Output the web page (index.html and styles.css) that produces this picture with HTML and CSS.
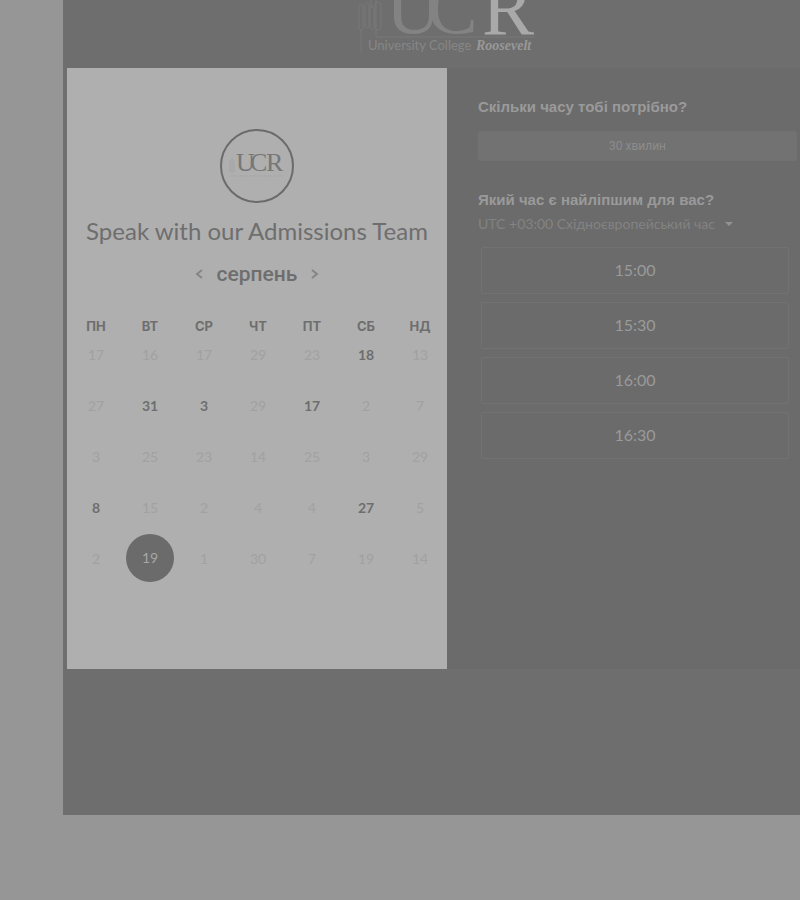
FILE: index.html
```
<!DOCTYPE html>
<html lang="uk">
<head>
<meta charset="utf-8">
<meta name="viewport" content="width=device-width, initial-scale=1">
<title>University College Roosevelt</title>
<link rel="stylesheet" href="styles.css">
</head>
<body>
<div class="shell">
  <header class="header">
    <svg class="logo" viewBox="0 0 180 56" role="img" aria-label="University College Roosevelt">
      <g class="logo-lines">
        <path d="M2 6q2-4 4 0v22q-2 5-4 0zM8 4q2-3 4 0v22q-2 4-4 0zM13 8q2-4 4 0v20q-2 4-4 0zM18 4q3-4 6 0v24q-3 5-6 0zM4 30v22M14 0v8M19 0v37h159"/>
      </g>
      <text class="logo-dim" x="29" y="33" font-size="76">U</text>
      <text class="logo-dim" x="70" y="33" font-size="76">C</text>
      <text class="logo-bright" x="125" y="34" font-size="78">R</text>
      <text class="logo-name" x="11" y="50">University College</text>
      <text class="logo-script" x="119" y="50">Roosevelt</text>
    </svg>
  </header>
  <main class="booking">
    <section class="calendar">
      <svg class="avatar" viewBox="0 0 76 76" role="img" aria-label="UCR">
        <circle cx="38" cy="38" r="36"/>
        <path d="M11 32v12M13 30v15M15 32v12"/>
        <text x="17" y="43">U</text>
        <text x="31" y="43">C</text>
        <text x="47" y="43">R</text>
        <path d="M12 48h52" stroke-dasharray="2 1"/>
      </svg>
      <h1 class="title">Speak with our Admissions Team</h1>
      <div class="month">
        <button class="arrow" type="button" aria-label="Попередній місяць"><svg viewBox="0 0 8 12"><path d="M7 2 2 6l5 4"/></svg></button>
        <h2 class="month-name">серпень</h2>
        <button class="arrow" type="button" aria-label="Наступний місяць"><svg viewBox="0 0 8 12"><path d="m1 2 5 4-5 4"/></svg></button>
      </div>
      <table class="days">
        <thead><tr><th>ПН</th><th>ВТ</th><th>СР</th><th>ЧТ</th><th>ПТ</th><th>СБ</th><th>НД</th></tr></thead>
        <tbody>
          <tr><td><button disabled>17</button></td><td><button disabled>16</button></td><td><button disabled>17</button></td><td><button disabled>29</button></td><td><button disabled>23</button></td><td><button>18</button></td><td><button disabled>13</button></td></tr>
          <tr><td><button disabled>27</button></td><td><button>31</button></td><td><button>3</button></td><td><button disabled>29</button></td><td><button>17</button></td><td><button disabled>2</button></td><td><button disabled>7</button></td></tr>
          <tr><td><button disabled>3</button></td><td><button disabled>25</button></td><td><button disabled>23</button></td><td><button disabled>14</button></td><td><button disabled>25</button></td><td><button disabled>3</button></td><td><button disabled>29</button></td></tr>
          <tr><td><button>8</button></td><td><button disabled>15</button></td><td><button disabled>2</button></td><td><button disabled>4</button></td><td><button disabled>4</button></td><td><button>27</button></td><td><button disabled>5</button></td></tr>
          <tr><td><button disabled>2</button></td><td><button class="selected" aria-pressed="true">19</button></td><td><button disabled>1</button></td><td><button disabled>30</button></td><td><button disabled>7</button></td><td><button disabled>19</button></td><td><button disabled>14</button></td></tr>
        </tbody>
      </table>
    </section>
    <section class="times">
      <h2 class="question">Скільки часу тобі потрібно?</h2>
      <button class="duration" type="button">30 хвилин</button>
      <h2 class="question"><label for="zone">Який час є найліпшим для вас?</label></h2>
      <div class="zone">
        <select id="zone"><option>UTC +03:00 Східноєвропейський час</option></select>
        <svg class="caret" viewBox="0 0 8 4" aria-hidden="true"><path d="M0 0h8L4 4z"/></svg>
      </div>
      <div class="slots">
        <button type="button">15:00</button>
        <button type="button">15:30</button>
        <button type="button">16:00</button>
        <button type="button">16:30</button>
      </div>
    </section>
  </main>
</div>
</body>
</html>
```
FILE: styles.css
```
* { box-sizing: border-box; }

body {
  margin: 0;
  overflow-x: hidden;
  background: #969696;
  font-family: "Liberation Sans", sans-serif;
}

button, select {
  margin: 0;
  padding: 0;
  border: 0;
  background: none;
  font: inherit;
  color: inherit;
}

h1, h2 { margin: 0; }

/* The panel runs past the right edge of the window. */
.shell {
  margin: 0 -31px 0 63px;
  padding: 0 4px 146px;
  background: #6e6e6e;
}

.header {
  display: flex;
  justify-content: center;
  padding-bottom: 12px;
}

.logo { width: 180px; height: 56px; }
.logo text { font-family: "Liberation Serif", serif; }
.logo-lines { fill: none; stroke: #797979; }
.logo .logo-dim { fill: #838383; }
.logo .logo-bright { fill: #a9a9a9; }
.logo .logo-name { fill: #868686; font: 13px Lato, sans-serif; }
.logo .logo-script { fill: #989898; font-size: 14px; font-style: italic; font-weight: 700; }

.booking {
  display: grid;
  grid-template-columns: 1fr 1fr;
}

.calendar {
  display: flex;
  flex-direction: column;
  align-items: center;
  padding: 60px 0 80px;
  background: #afafaf;
  color: #6e6e6e;
}

.avatar { width: 76px; height: 76px; }
.avatar circle { fill: none; stroke: #6b6b6b; stroke-width: 2; }
.avatar path { fill: none; stroke: #a3a3a3; }
.avatar text { fill: #777777; font: 26px "Liberation Serif", serif; }

.title {
  margin-top: 11px;
  font: 400 24px/32px Lato, sans-serif;
  white-space: nowrap;
}

.month {
  display: flex;
  align-items: center;
  gap: 14px;
  margin-top: 13px;
}
.month-name { font: 500 21px/28px Roboto, sans-serif; }
.arrow { display: flex; }
.arrow svg { width: 8px; height: 12px; fill: none; stroke: #858585; stroke-width: 2; }

.days {
  width: 100%;
  margin-top: 30px;
  padding: 0 0 0 2px;
  border-spacing: 0;
  table-layout: fixed;
}
.days th {
  height: 16px;
  padding: 0;
  font: 700 13px/16px Inter, sans-serif;
}
.days td {
  height: 51px;
  padding: 0;
  vertical-align: top;
}
.days button {
  display: block;
  width: 48px;
  height: 42px;
  margin: 0 auto;
  font: 700 14px/20px Lato, sans-serif;
}
.days button:disabled { color: #a1a1a1; font-weight: 400; }
.days .selected {
  height: 48px;
  margin: -4px auto 0;
  border-radius: 50%;
  background: #6b6b6b;
  color: #a6a6a6;
  font-weight: 400;
}

.times {
  padding: 29px 30px 0 31px;
  background: #6b6b6b;
  color: #9a9a9a;
}
.question { font: 700 15px/20px "Liberation Sans", sans-serif; }
.duration {
  display: block;
  width: 100%;
  height: 30px;
  margin: 14px 0 29px;
  border-radius: 3px;
  background: #727272;
  color: #8c8c8c;
  font: 12px Roboto, sans-serif;
}
.zone {
  display: flex;
  align-items: center;
  gap: 10px;
  height: 28px;
  color: #838383;
}
.zone select {
  appearance: none;
  font: 14px/20px Lato, "Liberation Sans", sans-serif;
}
.caret { width: 8px; height: 4px; fill: #929292; }
.slots {
  display: grid;
  gap: 8px;
  margin: 9px 8px 0 3px;
}
.slots button {
  height: 47px;
  padding-bottom: 2px;
  border: 1px solid #727272;
  border-radius: 2px;
  color: #9a9a9a;
  font: 16px Lato, sans-serif;
}
```
